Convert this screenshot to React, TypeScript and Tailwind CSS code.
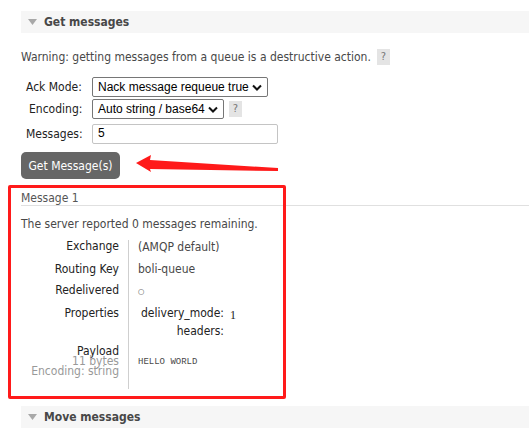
import React from 'react';

const body = "font-['DejaVu_Sans_Condensed','DejaVu_Sans',sans-serif]";

function SectionHeader({ title }: { title: string }) {
  return (
    <div className="flex h-[22px] items-center bg-[#f6f6f6]">
      <svg width="9" height="6" viewBox="0 0 9 6" className="ml-[7px]">
        <path d="M0 0 L9 0 L4.5 6 Z" fill="#a8a8a8" />
      </svg>
      <span className="ml-[7px] text-[12px] font-bold text-[#484848]">{title}</span>
    </div>
  );
}

function Help() {
  return (
    <span className="inline-flex h-[16px] w-[13px] items-center justify-center bg-[#e4e4e4] text-[11px] text-[#777]">?</span>
  );
}

function Chevron() {
  return (
    <svg width="10" height="7" viewBox="0 0 10 7" className="ml-auto mr-[5px] shrink-0">
      <path d="M1 1.5 L5 5.5 L9 1.5" fill="none" stroke="#111" strokeWidth="2" />
    </svg>
  );
}

export default function App() {
  return (
    <div className={`relative h-[439px] w-[529px] overflow-hidden bg-white text-[12px] text-[#484848] ${body}`}>
      <div className="pl-[21px] pt-[11px]">
        <SectionHeader title="Get messages" />

        <div className="mt-[15px] flex items-center gap-[6px]">
          <span>Warning: getting messages from a queue is a destructive action.</span>
          <Help />
        </div>

        <div className="mt-[11px] flex flex-col">
          <div className="flex items-center">
            <span className="w-[61px] pl-[5px] text-[#222]">Ack Mode:</span>
            <div className="ml-[10px] flex h-[20px] w-[176px] items-center whitespace-nowrap rounded-[2px] border border-[#767676] pl-[5px] font-['Liberation_Sans',sans-serif] text-[12px] text-black">
              Nack message requeue true
              <Chevron />
            </div>
          </div>
          <div className="mt-[2px] flex items-center">
            <span className="w-[61px] pl-[8px] text-[#222]">Encoding:</span>
            <div className="ml-[10px] flex h-[20px] w-[132px] items-center whitespace-nowrap rounded-[2px] border border-[#767676] pl-[5px] font-['Liberation_Sans',sans-serif] text-[12px] text-black">
              Auto string / base64
              <Chevron />
            </div>
            <span className="ml-[5px] flex"><Help /></span>
          </div>
          <div className="mt-[5px] flex items-center">
            <span className="w-[61px] pl-[5px] text-[#222]">Messages:</span>
            <div className="ml-[10px] flex h-[20px] w-[186px] items-start rounded-[2px] border border-[#c4c4c4] pl-[5px] pt-[1px] font-['Liberation_Sans',sans-serif] text-[12px] leading-[15px] text-black">
              5
            </div>
          </div>
        </div>

        <button className="mt-[8px] h-[27px] w-[99px] rounded-[5px] bg-[#666] text-[12px] text-white">
          Get Message(s)
        </button>

        <div className="mt-[12px] border-b border-[#e0e0e0] leading-[14px] text-[#555]">Message 1</div>

        <div className="mt-[11px] leading-[14px]">The server reported 0 messages remaining.</div>

        <div className="mt-[8px] flex text-[#222]">
          <div className="flex w-[98px] flex-col items-end pb-[13px] text-right leading-[14px]">
            <span>Exchange</span>
            <span className="mt-[9px]">Routing Key</span>
            <span className="mt-[7px]">Redelivered</span>
            <span className="mt-[9px]">Properties</span>
            <span className="mt-[26px] leading-[10px]">Payload</span>
            <span className="leading-[10px] text-[#999]">11 bytes</span>
            <span className="leading-[10px] text-[#999]">Encoding: string</span>
          </div>
          <div className="ml-[9px] mt-[1px] w-px bg-[#cfcfcf]" />
          <div className="flex flex-col pl-[9px] leading-[14px] text-[#484848]">
            <span className="mt-[1px]">(AMQP default)</span>
            <span className="mt-[8px]">boli-queue</span>
            <span className="mt-[9px] text-[8px]">○</span>
            <div className="mt-[7px] flex flex-col">
              <div className="flex items-end pl-[3px] text-[#222]">
                <span>delivery_mode:</span>
                <span className="ml-[6px] translate-y-[2px] font-['Liberation_Serif',serif]">1</span>
              </div>
              <div className="mt-[4px] w-[86px] text-right text-[#222]">headers:</div>
            </div>
            <span className="mt-[17px] font-['Liberation_Mono',monospace] text-[9px]">HELLO WORLD</span>
          </div>
        </div>

        <div className="mt-[17px]">
          <SectionHeader title="Move messages" />
        </div>
      </div>

      {/* red annotation box */}
      <div className="absolute left-[8px] top-[185px] h-[214px] w-[278px] rounded-[2px] border-[3px] border-[#ff1a1a]" />

      {/* red arrow */}
      <svg className="absolute left-[134px] top-[152px]" width="148" height="24" viewBox="0 0 148 24">
        <path d="M2 11 L17 3 L16 8 L144 16 L144 19 L16 17 L17 20 Z" fill="#ff1a1a" />
      </svg>
    </div>
  );
}
